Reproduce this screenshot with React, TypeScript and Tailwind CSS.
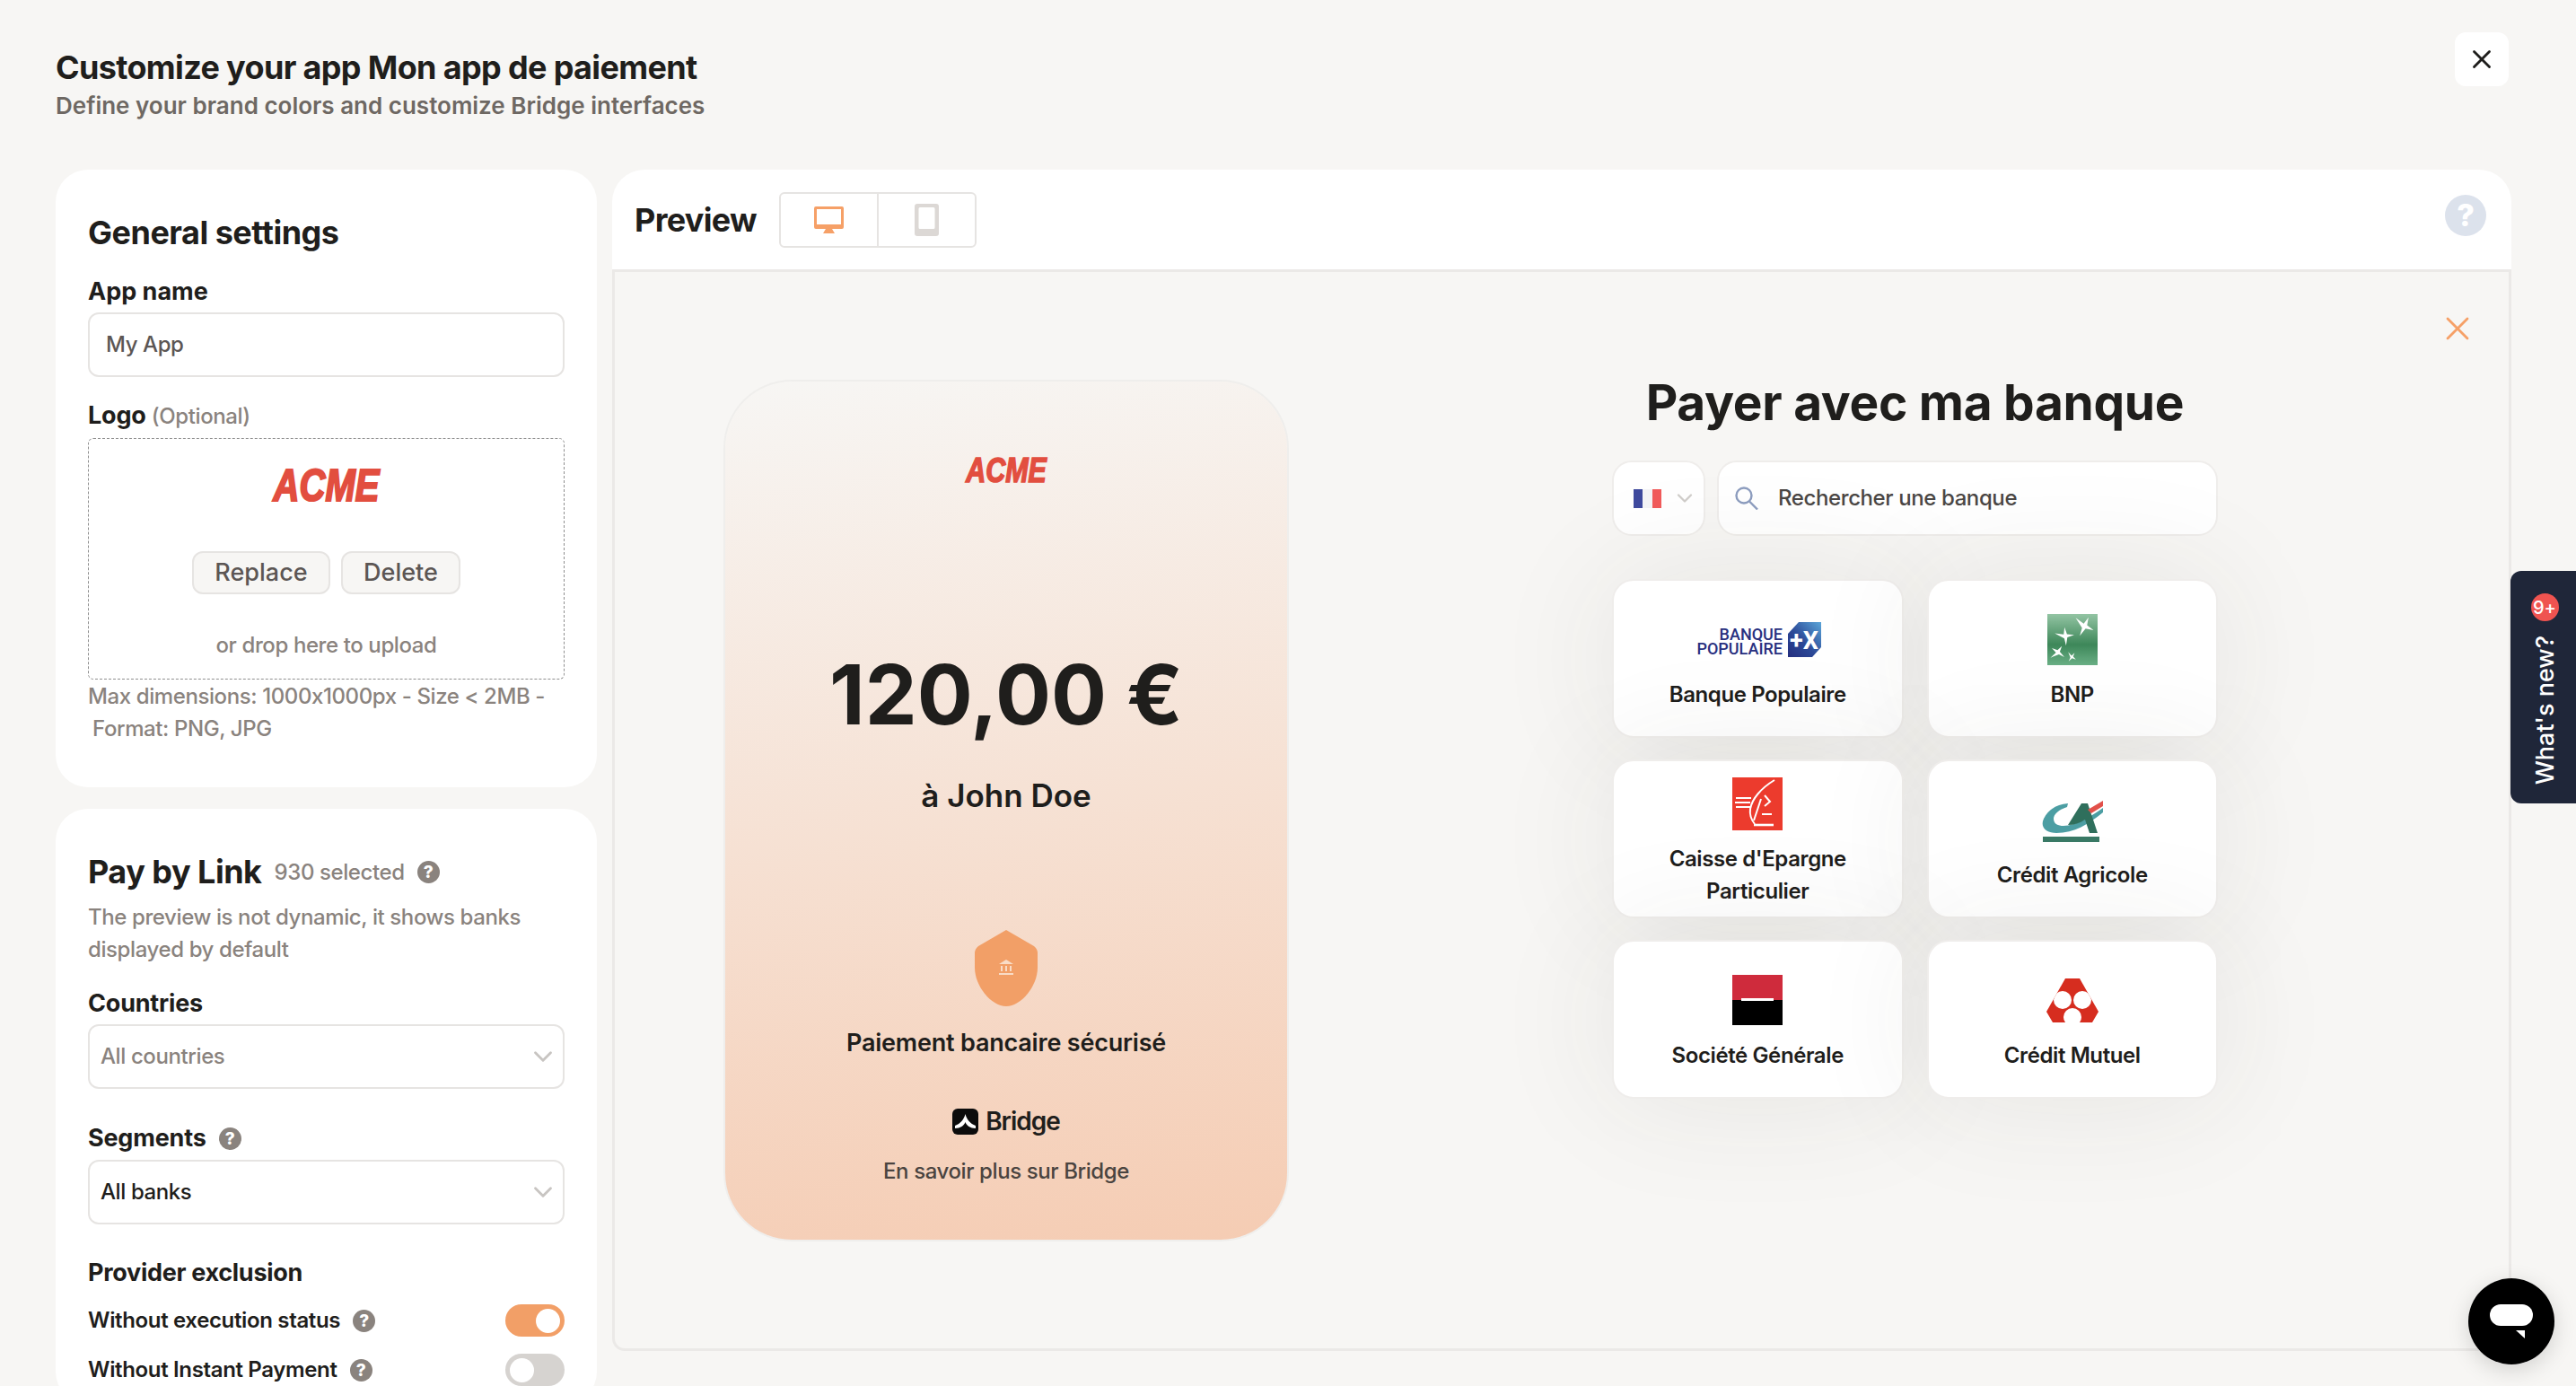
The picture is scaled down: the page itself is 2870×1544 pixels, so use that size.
import React from "react";
import { X, ChevronDown } from "lucide-react";

const Help: React.FC<{ className?: string }> = ({ className }) => (
  <span className={`flex h-[25px] w-[25px] items-center justify-center rounded-full bg-[#8a837e] text-[19px] leading-none font-extrabold text-white ${className ?? ""}`}>?</span>
);

const AcmeLogo: React.FC<{ big?: boolean }> = ({ big }) => (
  <div
    className={
      big
        ? "flex h-[37px] w-[117px] origin-center scale-x-[0.8] items-center justify-center font-['Liberation_Sans',sans-serif] text-[50px] leading-none font-bold text-[#e24e3f] italic [-webkit-text-stroke:2.2px_#e24e3f]"
        : "flex h-[28px] w-[88px] origin-center scale-x-[0.8] items-center justify-center font-['Liberation_Sans',sans-serif] text-[38px] leading-none font-bold text-[#e24e3f] italic [-webkit-text-stroke:1.6px_#e24e3f]"
    }
  >
    ACME
  </div>
);

const Star: React.FC<{ x: number; y: number; s: number; r: number }> = ({ x, y, s, r }) => (
  <path d="M-11 -8 L-1 -3 L3 -11 L3 -2 L11 2 L2 2 L-3 11 L-2 2 Z" fill="#fff" transform={`translate(${x} ${y}) rotate(${r}) scale(${s})`} />
);

const BpLogo = () => (
  <svg width="141" height="39" viewBox="0 0 141 39">
    <defs>
      <linearGradient id="bp" x1="1" y1="0" x2="0" y2="1">
        <stop offset="0" stopColor="#5aa5d8" />
        <stop offset="0.55" stopColor="#2c4a98" />
        <stop offset="1" stopColor="#252f7f" />
      </linearGradient>
    </defs>
    <text x="98" y="20" textAnchor="end" fontFamily="Roboto, sans-serif" fontSize="18" fontWeight="500" fill="#28307f">BANQUE</text>
    <text x="98" y="36" textAnchor="end" fontFamily="Roboto, sans-serif" fontSize="18" fontWeight="500" fill="#28307f">POPULAIRE</text>
    <path d="M116 0 H141 V28 L131 39 H104 V13 Z" fill="url(#bp)" />
    <text x="122" y="30" textAnchor="middle" fontFamily="Roboto, sans-serif" fontSize="27" fontWeight="700" fill="#fff">+X</text>
  </svg>
);

const BnpLogo = () => (
  <svg width="56" height="57" viewBox="0 0 56 57">
    <defs>
      <linearGradient id="bnp" x1="0" y1="0" x2="0" y2="1">
        <stop offset="0" stopColor="#93c4a3" />
        <stop offset="0.6" stopColor="#3d8759" />
        <stop offset="1" stopColor="#6aaf85" />
      </linearGradient>
    </defs>
    <rect width="56" height="57" fill="url(#bnp)" />
    <Star x={41} y={14} s={1} r={10} />
    <Star x={20} y={25} s={0.9} r={-20} />
    <Star x={12} y={43} s={0.75} r={-70} />
    <Star x={27} y={48} s={0.5} r={20} />
  </svg>
);

const CaisseLogo = () => (
  <svg width="56" height="59" viewBox="0 0 56 59">
    <rect width="56" height="59" fill="#ec3b2d" />
    <g fill="none" stroke="#fff" strokeWidth="2">
      <path d="M47 3 C32 12 22 24 20 35 C19 42 21 47 25 52" />
      <path d="M4 23 H21 M3 28 H20 M4 33 H20" />
      <path d="M32 24 L24 48" />
      <path d="M36 20 L42 27 L36 32" />
      <path d="M33 41 H44" />
      <path d="M24 53 H46" strokeWidth="2.6" />
    </g>
  </svg>
);

const CaLogo = () => (
  <svg width="68" height="46" viewBox="0 0 68 46">
    <path d="M68 13 C52 26 36 36 16 36 C3 36 -2 28 2 20 C7 10 16 4 29 3 L28 7 C19 10 13 15 13 20 C13 26 18 28 24 28 C38 28 54 18 68 8 Z" fill="#4c9ea3" />
    <path d="M29 27 L44 3 H51 L62 36 H53 L48 21 C42 25 36 27 29 27 Z" fill="#2f6f5c" />
    <path d="M51 10 L68 0 V6 L55 14 Z" fill="#e2504a" />
    <rect x="1" y="40" width="63" height="6" fill="#3a7a66" />
  </svg>
);

const SgLogo = () => (
  <div className="relative flex h-[56px] w-[56px] flex-col">
    <div className="h-[28px] bg-[#cf2b3c]" />
    <div className="h-[28px] bg-black" />
    <div className="absolute top-[26px] left-[10px] h-[3px] w-[36px] bg-white" />
  </div>
);

const CmLogo = () => (
  <svg width="58" height="49" viewBox="0 0 58 49">
    <defs>
      <clipPath id="cm">
        <path d="M21 0 H37 L58 37 L51 49 H7 L0 37 Z" />
      </clipPath>
    </defs>
    <path d="M21 0 H37 L58 37 L51 49 H7 L0 37 Z" fill="#d62d1f" />
    <g clipPath="url(#cm)" fill="#fff">
      <circle cx="18" cy="24" r="10" />
      <circle cx="40" cy="24" r="10" />
      <circle cx="29" cy="43" r="10" />
    </g>
  </svg>
);

const banks = [
  { name: ["Banque Populaire"], logo: <BpLogo /> },
  { name: ["BNP"], logo: <BnpLogo /> },
  { name: ["Caisse d'Epargne", "Particulier"], logo: <CaisseLogo /> },
  { name: ["Crédit Agricole"], logo: <CaLogo />, nudge: true },
  { name: ["Société Générale"], logo: <SgLogo /> },
  { name: ["Crédit Mutuel"], logo: <CmLogo /> },
];

const Select: React.FC<{ value: string; muted?: boolean; className?: string }> = ({ value, muted, className }) => (
  <div className={`flex h-[72px] items-center justify-between rounded-[12px] border-2 border-[#e6e4e2] pr-[5px] pl-[12px] ${className ?? ""}`}>
    <span className={`text-[24px] font-medium tracking-[-0.4px] ${muted ? "text-[#8a837e]" : "text-[#1f1e1c]"}`}>{value}</span>
    <ChevronDown size={34} strokeWidth={2} className="text-[#c8c5c2]" />
  </div>
);

const Toggle: React.FC<{ on?: boolean }> = ({ on }) => (
  <div className={`flex h-[36px] w-[66px] items-center rounded-full px-[5px] ${on ? "justify-end bg-[#f29f67]" : "justify-start bg-[#d6d3d0]"}`}>
    <div className="h-[27px] w-[27px] rounded-full bg-white" />
  </div>
);

export default function App() {
  return (
    <div className="relative h-[1544px] w-[2870px] overflow-hidden bg-[#f7f6f4] font-[Inter,sans-serif] text-[#1f1e1c] [font-variant-ligatures:no-contextual]">
      <header className="flex h-[189px] justify-between pr-[75px] pl-[62px]">
        <div className="pt-[54px]">
          <h1 className="text-[36px] leading-[42px] font-bold tracking-[-0.65px]">Customize your app Mon app de paiement</h1>
          <p className="mt-[5px] text-[26px] leading-[34px] font-semibold text-[#6e6863]">Define your brand colors and customize Bridge interfaces</p>
        </div>
        <button className="mt-[36px] flex h-[60px] w-[60px] items-center justify-center rounded-[12px] bg-white">
          <X size={34} strokeWidth={2} />
        </button>
      </header>

      <div className="flex items-start pr-[72px] pl-[62px]">
        <aside className="flex w-[603px] flex-col gap-[24px]">
          <section className="rounded-[36px] bg-white px-[36px] pt-[48px] pb-[47px]">
            <h2 className="text-[36px] leading-[44px] font-bold tracking-[-0.5px]">General settings</h2>
            <div className="mt-[26px] text-[27px] leading-[36px] font-bold">App name</div>
            <div className="mt-[5px] flex h-[72px] items-center rounded-[12px] border-2 border-[#e6e4e2] pl-[18px] text-[24px] font-medium tracking-[-0.4px] text-[#5c5654]">My App</div>
            <div className="mt-[25px] text-[27px] leading-[36px] font-bold tracking-[-0.2px]">
              Logo <span className="text-[24px] font-medium tracking-[-0.4px] text-[#8a837e]">(Optional)</span>
            </div>
            <div className="mt-[6px] flex h-[269px] flex-col items-center rounded-[6px] border border-dashed border-[#8f8f8f] pt-[33px]">
              <AcmeLogo big />
              <div className="mt-[55px] flex gap-[12px]">
                <button className="flex h-[48px] w-[154px] items-center justify-center rounded-[12px] border-2 border-[#e6e4e2] bg-[#f7f6f4] text-[27px] font-medium text-[#5c5654]">Replace</button>
                <button className="flex h-[48px] w-[133px] items-center justify-center rounded-[12px] border-2 border-[#e6e4e2] bg-[#f7f6f4] text-[27px] font-medium text-[#5c5654]">Delete</button>
              </div>
              <div className="mt-[39px] text-[24px] leading-[36px] font-medium tracking-[-0.4px] text-[#8a837e]">or drop here to upload</div>
            </div>
            <p className="mt-px text-[24px] leading-[36px] font-medium tracking-[-0.4px] text-[#8a837e]">
              Max dimensions: 1000x1000px - Size &lt; 2MB -<br />
              <span className="pl-[5px]">Format: PNG, JPG</span>
            </p>
          </section>

          <section className="rounded-[36px] bg-white px-[36px] pt-[48px] pb-[20px]">
            <div className="flex h-[44px] items-center">
              <h2 className="text-[36px] leading-[44px] font-bold tracking-[-0.5px]">Pay by Link</h2>
              <span className="mt-[2px] ml-[14px] text-[24px] font-medium tracking-[-0.4px] text-[#8a837e]">930 selected</span>
              <Help className="ml-[14px]" />
            </div>
            <p className="mt-[11px] text-[24px] leading-[36px] font-medium tracking-[-0.4px] text-[#8a837e]">
              The preview is not dynamic, it shows banks<br />displayed by default
            </p>
            <div className="mt-[24px] text-[27px] leading-[36px] font-bold tracking-[-0.2px]">Countries</div>
            <Select value="All countries" muted className="mt-[5px]" />
            <div className="mt-[37px] flex items-center gap-[14px] text-[27px] leading-[36px] font-bold tracking-[-0.2px]">Segments <Help /></div>
            <Select value="All banks" className="mt-[6px]" />
            <div className="mt-[36px] text-[27px] leading-[36px] font-bold tracking-[-0.3px]">Provider exclusion</div>
            <div className="mt-[17px] flex h-[36px] items-center justify-between">
              <div className="flex items-center gap-[14px] text-[24px] font-semibold tracking-[-0.35px]">Without execution status <Help /></div>
              <Toggle on />
            </div>
            <div className="mt-[19px] flex h-[36px] items-center justify-between">
              <div className="flex items-center gap-[14px] text-[24px] font-semibold tracking-[-0.35px]">Without Instant Payment <Help /></div>
              <Toggle />
            </div>
          </section>
        </aside>

        <main className="ml-[17px] w-[2116px] overflow-hidden rounded-t-[36px]">
          <div className="flex h-[111px] items-center bg-white pr-[28px] pl-[25px]">
            <h2 className="text-[36px] font-bold tracking-[-0.7px]">Preview</h2>
            <div className="ml-[25px] flex h-[62px] w-[220px] rounded-[6px] border-2 border-[#e6e4e2]">
              <div className="flex flex-1 items-center justify-center border-r-2 border-[#e6e4e2]">
                <svg width="33" height="30" viewBox="0 0 33 30">
                  <path d="M2 0 H31 A2 2 0 0 1 33 2 V23 A2 2 0 0 1 31 25 H2 A2 2 0 0 1 0 23 V2 A2 2 0 0 1 2 0 Z M3 3 V20 H30 V3 Z" fill="#f6a067" fillRule="evenodd" />
                  <path d="M13 25 H20 L23 30 H10 Z" fill="#f6a067" />
                </svg>
              </div>
              <div className="flex flex-1 items-center justify-center">
                <svg width="27" height="36" viewBox="0 0 27 36">
                  <path d="M3 0 H24 A3 3 0 0 1 27 3 V33 A3 3 0 0 1 24 36 H3 A3 3 0 0 1 0 33 V3 A3 3 0 0 1 3 0 Z M6 4 A1.5 1.5 0 0 0 4.5 5.5 V26.5 A1.5 1.5 0 0 0 6 28 H21 A1.5 1.5 0 0 0 22.5 26.5 V5.5 A1.5 1.5 0 0 0 21 4 Z" fill="#dcd8d5" fillRule="evenodd" />
                </svg>
              </div>
            </div>
            <div className="mb-[9px] ml-auto flex h-[46px] w-[46px] items-center justify-center rounded-full bg-[#dce2ec] text-[34px] leading-none font-extrabold text-white">?</div>
          </div>

          <div className="relative flex h-[1205px] rounded-b-[14px] border-[3px] border-[#ebe9e7] pt-[120px] pl-[121px]">
            <X size={44} strokeWidth={1.5} className="absolute top-[41px] right-[35px] text-[#f6a067]" />

            <div className="flex h-[960px] w-[630px] flex-col items-center rounded-[76px] border-2 border-[#00000008] bg-[linear-gradient(172deg,#f7f6f4_0%,#f5ccb3_100%)] bg-clip-padding pt-[85px]">
              <AcmeLogo />
              <div className="mt-[186px] text-[92px] leading-[100px] font-bold">120,00 €</div>
              <div className="mt-[40px] text-[35px] leading-[44px] font-semibold">à John Doe</div>
              <svg className="mt-[128px]" width="70" height="85" viewBox="0 0 70 85">
                <path d="M35 0 L66 18 Q70 21 70 26 V42 C70 62 52 85 35 85 C18 85 0 62 0 42 V26 Q0 21 4 18 Z" fill="#f29f67" />
                <g fill="#f9dcc6">
                  <path d="M35 33 L43 38 H27 Z" />
                  <rect x="29" y="40" width="2" height="6" />
                  <rect x="34" y="40" width="2" height="6" />
                  <rect x="39" y="40" width="2" height="6" />
                  <rect x="27" y="48" width="16" height="2" />
                </g>
              </svg>
              <div className="mt-[23px] text-[27px] leading-[36px] font-semibold tracking-[-0.2px]">Paiement bancaire sécurisé</div>
              <div className="mt-[51px] flex h-[36px] items-center gap-[8px]">
                <svg width="29" height="29" viewBox="0 0 29 29">
                  <rect width="29" height="29" rx="6" fill="#0c0c0c" />
                  <path d="M14.5 6 C16 12 20 17 26 19 V22 C20 22 16 19 14.5 15 C13 19 9 22 3 22 V19 C9 17 13 12 14.5 6 Z" fill="#fff" />
                </svg>
                <span className="text-[28px] font-semibold tracking-[-1px]">Bridge</span>
              </div>
              <div className="mt-[20px] text-[24px] leading-[36px] font-medium tracking-[-0.4px] text-[#4a4440]">En savoir plus sur Bridge</div>
            </div>

            <div className="ml-[360px] w-[675px]">
              <h2 className="-mt-[7px] text-center text-[55px] leading-[64px] font-bold tracking-[-0.3px]">Payer avec ma banque</h2>
              <div className="mt-[33px] flex gap-[13px]">
                <div className="flex h-[84px] w-[104px] items-center rounded-[22px] border-2 border-[#efedeb] bg-white pl-[22px]">
                  <div className="flex h-[21px] w-[31px]">
                    <div className="flex-1 bg-[#3f4a9e]" />
                    <div className="flex-1 bg-[#f4f4f6]" />
                    <div className="flex-1 bg-[#f15b5b]" />
                  </div>
                  <ChevronDown size={28} strokeWidth={2} className="ml-[12px] text-[#d0cdca]" />
                </div>
                <div className="flex h-[84px] flex-1 items-center rounded-[22px] border-2 border-[#efedeb] bg-white pl-[18px]">
                  <svg width="26" height="26" viewBox="0 0 26 26" fill="none" stroke="#8d9dbf" strokeWidth="2.4">
                    <circle cx="10" cy="10" r="8.5" />
                    <path d="M16 16.5 L25 25.5" />
                  </svg>
                  <span className="ml-[22px] text-[24px] font-medium tracking-[-0.4px] text-[#4b4745]">Rechercher une banque</span>
                </div>
              </div>
              <div className="mt-[48px] grid grid-cols-2 gap-x-[26px] gap-y-[24px]">
                {banks.map((b) => (
                  <div key={b.name[0]} className="relative flex h-[177px] flex-col items-center justify-center rounded-[24px] border-2 border-[#efedeb] bg-white pt-[7px] shadow-[0_0_140px_rgba(60,50,40,0.09)]">
                    <div className={`relative flex h-[60px] items-center justify-center ${b.nudge ? "pt-[4px]" : ""}`}>{b.logo}</div>
                    <div className="mt-[14px] text-center text-[24px] leading-[36px] font-semibold tracking-[-0.4px] text-[#1f1e1c]">
                      {b.name.map((n) => (
                        <div key={n}>{n}</div>
                      ))}
                    </div>
                  </div>
                ))}
              </div>
            </div>
          </div>
        </main>
      </div>

      <div className="absolute top-[636px] right-0 flex h-[259px] w-[73px] flex-col items-center rounded-l-[12px] bg-[#1f2639] pt-[25px] pl-[3px]">
        <div className="flex h-[31px] w-[31px] items-center justify-center rounded-full bg-[#ef5350] text-[20px] leading-none font-medium text-white">9+</div>
        <div className="mt-[16px] rotate-180 text-[27px] leading-none font-medium text-white [writing-mode:vertical-rl]">What's new?</div>
      </div>

      <div className="absolute top-[1424px] left-[2750px] flex h-[96px] w-[96px] items-center justify-center rounded-full bg-black shadow-[0_6px_24px_rgba(0,0,0,0.15)]">
        <svg width="48" height="38" viewBox="0 0 48 38">
          <rect width="48" height="24" rx="12" fill="#fff" />
          <path d="M29 29 H39 V38 Z" fill="#fff" />
        </svg>
      </div>
    </div>
  );
}
